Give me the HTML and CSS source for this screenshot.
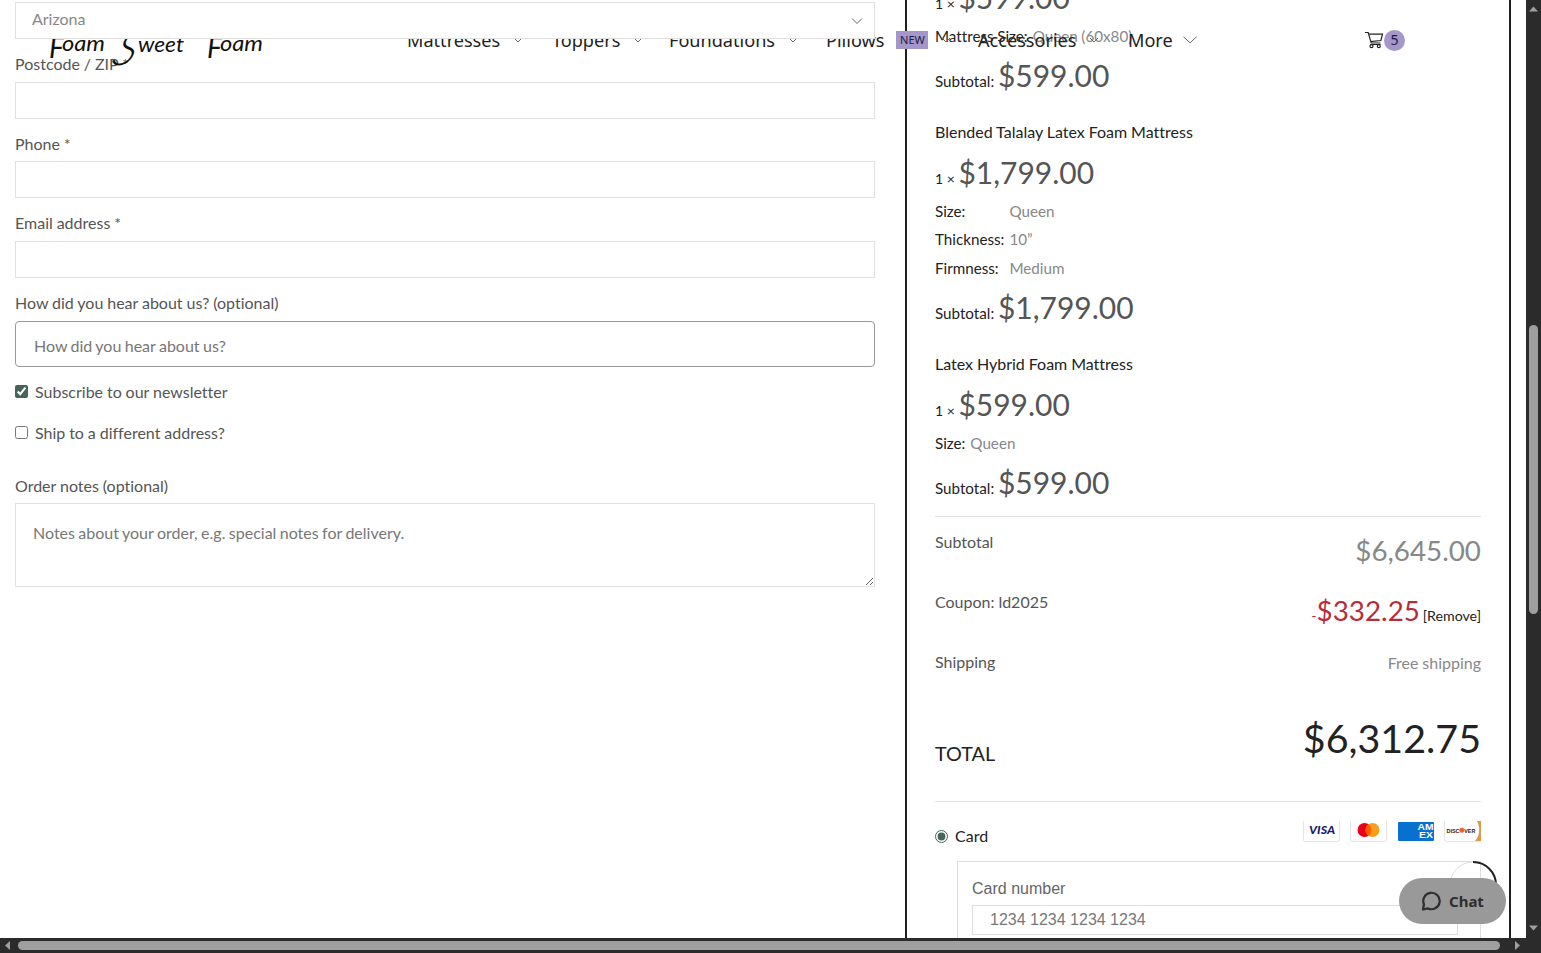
FILE: index.html
```html
<!DOCTYPE html>
<html lang="en">
<head>
  <meta charset="UTF-8" />
  <meta name="viewport" content="width=device-width, initial-scale=1.0" />
  <title>Checkout - Foam Sweet Foam</title>
  <link rel="stylesheet" href="styles.css">
</head>
<body>
  <div class="page">
    <header class="site-header">
      <svg class="logo" width="230" height="80" viewBox="0 0 230 80">
        <text class="logo-f" x="4" y="58">F</text>
        <text x="17" y="50.500" textLength="43" lengthAdjust="spacingAndGlyphs">oam</text>
        <text class="logo-s" transform="translate(65 65) skewX(-22)" textLength="22" lengthAdjust="spacingAndGlyphs">S</text>
        <text x="93" y="51.500" textLength="46" lengthAdjust="spacingAndGlyphs">weet</text>
        <text class="logo-f" x="162" y="58">F</text>
        <text x="175" y="50.500" textLength="43" lengthAdjust="spacingAndGlyphs">oam</text>
      </svg>
      <nav class="nav">
        <a>Mattresses <svg class="chev" viewBox="0 0 10 6"><path d="M1 1l4 4 4-4" /></svg></a>
        <a>Toppers <svg class="chev" viewBox="0 0 10 6"><path d="M1 1l4 4 4-4" /></svg></a>
        <a>Foundations <svg class="chev" viewBox="0 0 10 6"><path d="M1 1l4 4 4-4" /></svg></a>
        <a>Pillows <span class="tag">NEW</span><svg class="chev" viewBox="0 0 10 6"><path d="M1 1l4 4 4-4" /></svg></a>
        <a>Accessories <svg class="chev" viewBox="0 0 10 6"><path d="M1 1l4 4 4-4" /></svg></a>
        <a>More <svg class="chev chev-lg" viewBox="0 0 14 8"><path d="M.5 .8l6.500 6 6.500-6" /></svg></a>
      </nav>
      <div class="cart">
        <svg width="19" height="18" viewBox="0 0 19 18"><path d="M0 1.500h3.200l3 10.500h9.300M3.700 3.200h13.800l-1.600 6.300-10.500 1.200M5.500 13.500h10" /><circle cx="6.500" cy="15.200" r="1.500" /><circle cx="13.800" cy="15.200" r="1.500" /></svg>
        <span class="cart-count">5</span>
      </div>
    </header>

    <main class="checkout">
      <form class="billing">
        <div class="field select">Arizona
          <svg width="12" height="8" viewBox="0 0 12 8"><path d="M1 1.500l5 5 5-5" /></svg>
        </div>
        <label for="zip">Postcode / ZIP *</label>
        <input class="field" id="zip" type="text" />
        <label for="phone">Phone *</label>
        <input class="field" id="phone" type="tel" />
        <label for="email">Email address *</label>
        <input class="field" id="email" type="email" />
        <label for="source">How did you hear about us? (optional)</label>
        <input class="field source" id="source" type="text" placeholder="How did you hear about us?" />
        <div class="check"><input type="checkbox" id="news" checked /><span>Subscribe to our newsletter</span></div>
        <div class="check ship"><input type="checkbox" id="ship" /><span>Ship to a different address?</span></div>
        <label class="notes-label" for="notes">Order notes (optional)</label>
        <textarea class="field notes" id="notes" placeholder="Notes about your order, e.g. special notes for delivery."></textarea>
      </form>

      <section class="order">
        <div class="items">
          <div class="item">
            <div class="qty">1 × <span class="price">$599.00</span></div>
            <dl class="meta"><dt>Mattress Size:</dt><dd>Queen (60x80)</dd></dl>
            <div class="sub">Subtotal: <span class="price">$599.00</span></div>
          </div>
          <div class="item">
            <div class="name">Blended Talalay Latex Foam Mattress</div>
            <div class="qty">1 × <span class="price">$1,799.00</span></div>
            <dl class="meta">
              <dt>Size:</dt><dd>Queen</dd>
              <dt>Thickness:</dt><dd>10”</dd>
              <dt>Firmness:</dt><dd>Medium</dd>
            </dl>
            <div class="sub">Subtotal: <span class="price">$1,799.00</span></div>
          </div>
          <div class="item">
            <div class="name">Latex Hybrid Foam Mattress</div>
            <div class="qty">1 × <span class="price">$599.00</span></div>
            <dl class="meta"><dt>Size:</dt><dd>Queen</dd></dl>
            <div class="sub">Subtotal: <span class="price">$599.00</span></div>
          </div>
        </div>

        <div class="totals">
          <div class="row"><span>Subtotal</span><span class="amount">$6,645.00</span></div>
          <div class="row"><span>Coupon: ld2025</span><span class="coupon">-<span class="amount">$332.25</span> <a>[Remove]</a></span></div>
          <div class="row"><span>Shipping</span><span class="free">Free shipping</span></div>
          <div class="row total"><span>TOTAL</span><span class="grand">$6,312.75</span></div>
        </div>

        <div class="method">
          <input type="radio" id="card" checked />
          <span class="method-name">Card</span>
          <div class="brands">
            <svg width="37" height="21" viewBox="0 0 37 21"><rect class="plate" x=".5" y="-3" width="36" height="23.500" rx="2" /><text class="visa" x="6" y="13" textLength="26" lengthAdjust="spacingAndGlyphs">VISA</text></svg>
            <svg width="37" height="21" viewBox="0 0 37 21"><rect class="plate" x=".5" y="-3" width="36" height="23.500" rx="2" /><circle cx="14.500" cy="9" r="7" fill="#eb001b" /><circle cx="22.500" cy="9" r="7" fill="#f79e1b" /><path d="M18.500 3.300a7 7 0 0 1 0 11.400 7 7 0 0 1 0-11.400" fill="#ff5f00" /></svg>
            <svg width="37" height="21" viewBox="0 0 37 21"><rect x="1" y="1" width="36" height="19" rx="1" fill="#0870cf" /><text class="amex" x="20.500" y="9" textLength="16" lengthAdjust="spacingAndGlyphs">AM</text><text class="amex" x="22" y="17" textLength="14" lengthAdjust="spacingAndGlyphs">EX</text></svg>
            <svg width="37" height="21" viewBox="0 0 37 21"><rect class="plate" x=".5" y="-3" width="36" height="23.500" rx="2" /><path d="M33 0h4v20h-6c4-4 6-12 2-20" fill="#e0994a" /><text class="disc" x="2.500" y="11.500" textLength="13" lengthAdjust="spacingAndGlyphs">DISC</text><circle cx="17.800" cy="9.300" r="2.500" fill="#f0652a" /><text class="disc" x="20.300" y="11.500" textLength="11" lengthAdjust="spacingAndGlyphs">VER</text></svg>
          </div>
        </div>
        <div class="card-box">
          <label for="cardno">Card number</label>
          <input id="cardno" type="text" placeholder="1234 1234 1234 1234" />
        </div>
      </section>
    </main>

    <svg class="spinner" width="48" height="48" viewBox="0 0 48 48"><circle cx="24" cy="24" r="23" /><path d="M24 1a23 23 0 0 1 23 23" /></svg>
    <div class="chat">
      <svg width="20" height="20" viewBox="0 0 20 20"><path d="M2 18.500l1-5.200A8.200 8.200 0 1 1 7 17.400z" /></svg>
      <span>Chat</span>
    </div>
  </div>

  <div class="vbar">
    <svg width="9" height="6" viewBox="0 0 9 6"><path d="M0 5.500L4.500 .5 9 5.500z" /></svg>
    <div class="vthumb"></div>
    <svg width="9" height="6" viewBox="0 0 9 6"><path d="M0 .5L4.500 5.500 9 .5z" /></svg>
  </div>
  <div class="hbar">
    <svg width="5" height="9" viewBox="0 0 5 9"><path d="M5 0L0 4.500 5 9z" /></svg>
    <div class="hthumb"></div>
    <svg width="5" height="9" viewBox="0 0 5 9"><path d="M0 0l5 4.500L0 9z" /></svg>
  </div>
</body>
</html>
```
FILE: styles.css
```css
* {
  box-sizing: border-box;
}
body {
  margin: 0;
  width: 1541px;
  height: 953px;
  overflow: hidden;
  display: grid;
  grid-template-columns: 1526px 15px;
  grid-template-rows: 938px 15px;
  font-family: Lato, sans-serif;
  font-size: 16px;
  line-height: 24px;
  font-variant-ligatures: none;
  word-spacing: -.2px;
  color: #555;
  background: #fff;
}
svg {
  display: block;
  fill: none;
}
.page {
  position: relative;
  overflow: hidden;
}

/* sticky header, lies over the form */
.site-header {
  position: absolute;
  z-index: 1;
  top: 0;
  left: 0;
  width: 100%;
  height: 80px;
  display: flex;
  align-items: center;
  padding-left: 45px;
  font-family: "Noto Sans", sans-serif;
  color: #222;
}
.logo {
  flex: none;
}
.logo text {
  font: italic 22px Lato, cursive;
  fill: #111;
}
.logo .logo-f {
  font-size: 28px;
}
.logo .logo-s {
  font-size: 46px;
  font-weight: 300;
}
.nav {
  display: grid;
  grid-template-columns: 145px 117px 157px 152px 150px 80px;
  margin-left: 132px;
  font-size: 18.1px;
}
.nav a {
  display: flex;
  align-items: center;
}
.chev {
  width: 10px;
  height: 6px;
  margin-left: 13px;
  stroke: #666;
}
.chev-lg {
  width: 14px;
  height: 8px;
  margin-left: 10px;
}
.tag {
  margin-left: 12px;
  width: 32px;
  height: 18px;
  line-height: 18px;
  font-size: 11px;
  text-align: center;
  background: #a597c9;
  color: #221c44;
}
.cart {
  display: flex;
  align-items: center;
  margin-left: 157px;
}
.cart path,
.cart circle {
  stroke: #222;
  stroke-width: 1.2;
}
.cart-count {
  width: 21px;
  height: 21px;
  border-radius: 50%;
  background: #a597c9;
  color: #1f1747;
  font-size: 14px;
  line-height: 20px;
  text-align: center;
}

.checkout {
  display: flex;
  gap: 30px;
  padding-left: 15px;
}
.billing {
  width: 860px;
  padding-top: 2px;
}
.billing label {
  display: block;
  height: 42.5px;
  padding-top: 13px;
}
.field {
  display: block;
  width: 100%;
  height: 37px;
  border: 1px solid #e1e1e1;
  background: #fff;
  padding: 0 16px;
  font: 16px Lato, sans-serif;
  font-variant-ligatures: none;
  word-spacing: -.7px;
  outline: none;
}
.field::placeholder {
  color: #777;
}
.select {
  position: relative;
  z-index: 2;
  display: flex;
  align-items: center;
  justify-content: space-between;
  padding: 0 11px 4px 16px;
  color: #888;
}
.select svg {
  margin-top: 4px;
}
.select path {
  stroke: #666;
}
.source {
  height: 46px;
  margin-top: .5px;
  padding: 4px 18px 0;
  border: 1px solid #999;
  border-radius: 4px;
}
.check {
  display: flex;
  align-items: center;
  gap: 7px;
  margin-top: 13px;
}
.check input,
.method input {
  width: 13px;
  height: 13px;
  margin: 0;
  accent-color: #45645a;
}
.ship {
  margin-top: 17px;
}
.billing .notes-label {
  margin-top: 16px;
}
.notes {
  height: 84px;
  padding: 19px 17px;
  line-height: 20px;
}

.order {
  width: 606px;
  height: 938px;
  padding: 0 28px;
  border: solid #1d1f24;
  border-width: 0 2px;
  color: #222;
}
.items {
  margin-top: -29px;
  height: 546px;
  border-bottom: 1px solid #e1e1e1;
}
.item {
  padding-bottom: 22px;
}
.name {
  height: 28px;
  line-height: 28px;
}
.qty {
  height: 51px;
  line-height: 53px;
  font-size: 14px;
  word-spacing: 0;
}
.price {
  font-size: 30px;
  color: #555;
}
.meta {
  display: grid;
  grid-template-columns: max-content 1fr;
  grid-auto-rows: 28.4px;
  column-gap: 5px;
  margin: 0;
  line-height: 28px;
  font-size: 15.2px;
}
.meta dd {
  margin: 0;
  color: #888;
}
.sub {
  height: 45.6px;
  line-height: 50px;
  font-size: 15.2px;
}

.totals {
  height: 285px;
  padding-top: 13px;
  border-bottom: 1px solid #e1e1e1;
  color: #555;
}
.row {
  display: flex;
  justify-content: space-between;
  height: 60px;
}
.amount {
  font-size: 27.8px;
  line-height: 42px;
}
.row > .amount,
.free {
  color: #888;
}
.free {
  line-height: 25px;
}
.coupon {
  color: #b92b36;
  font-size: 14.2px;
  word-spacing: -.8px;
}
.coupon a {
  color: #222;
}
.total {
  color: #222;
  font-size: 19.8px;
}
.total span:first-child {
  padding-top: 31px;
}
.grand {
  font-size: 39.4px;
  line-height: 55px;
}

.method {
  display: flex;
  align-items: center;
  height: 59px;
  padding-top: 10px;
}
.method-name {
  margin: -2px 0 0 7px;
}
.brands {
  display: flex;
  gap: 10px;
  margin: -10px 0 0 auto;
}
.plate {
  fill: #fff;
  stroke: #e4e4e4;
}
.visa {
  font: italic 900 11px Lato, sans-serif;
  fill: #1a1f71;
}
.amex {
  font: bold 9.5px "Liberation Sans", sans-serif;
  fill: #fff;
}
.disc {
  font: bold 6px "Liberation Sans", sans-serif;
  fill: #222;
}
.card-box {
  margin-left: 22px;
  height: 90px;
  padding: 15px 22px 0 14px;
  border: 1px solid #ddd;
  font-family: "Liberation Sans", Arial, sans-serif;
  word-spacing: 0;
  color: #666;
}
.card-box label {
  display: block;
  height: 28px;
}
.card-box input {
  width: 100%;
  height: 30px;
  padding: 0 17px;
  border: 1px solid #ddd;
  font: 16px "Liberation Sans", Arial, sans-serif;
}
.card-box input::placeholder {
  color: #777;
}

.spinner {
  position: absolute;
  left: 1449px;
  top: 861px;
}
.spinner circle {
  stroke: #ddd;
}
.spinner path {
  stroke: #222;
  stroke-width: 2;
}
.chat {
  position: absolute;
  left: 1399px;
  top: 878px;
  width: 107px;
  height: 46px;
  border-radius: 23px;
  background: #999;
  color: #2e2e2e;
  display: flex;
  align-items: center;
  padding-left: 22px;
  gap: 8px;
  font: bold 15px "Noto Sans", sans-serif;
}
.chat path {
  stroke: #2e2e2e;
  stroke-width: 2.2;
  stroke-linejoin: round;
}

/* dark scrollbars */
.vbar,
.hbar {
  background: #2b2b2b;
  display: flex;
  align-items: center;
}
.vbar path,
.hbar path {
  fill: #9f9f9f;
}
.vbar {
  flex-direction: column;
  justify-content: space-between;
  padding: 6px 0 7px;
}
.vthumb {
  width: 9px;
  height: 289px;
  border-radius: 5px;
  background: #9f9f9f;
  margin-top: 2px;
}
.hbar {
  grid-column: 1 / 3;
  padding-left: 5px;
}
.hthumb {
  width: 1482px;
  height: 9px;
  border-radius: 5px;
  background: #9f9f9f;
  margin: 0 15px 0 8px;
}
```
